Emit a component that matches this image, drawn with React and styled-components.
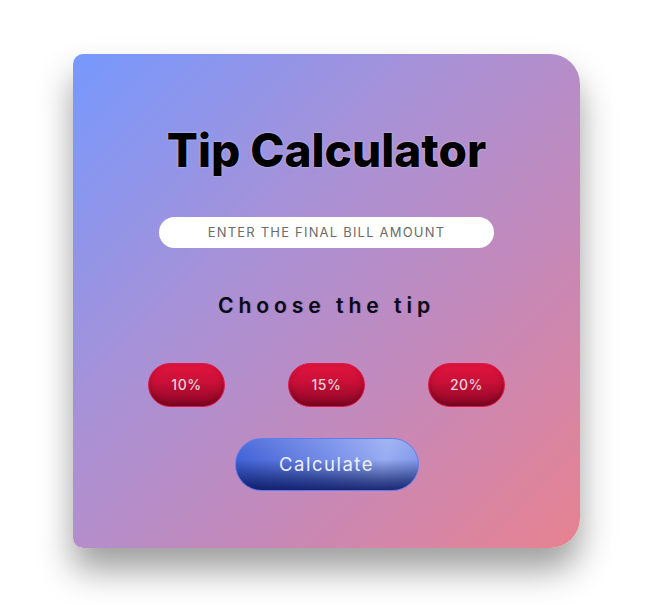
import React from 'react';
import styled, {createGlobalStyle} from 'styled-components';

const GlobalStyle = createGlobalStyle`
  body {
    margin: 0;
    background: #ffffff;
    font-family: "Inter", "Noto Sans", sans-serif;
  }
`;

const Wrapper = styled.main`
  min-height: 100vh;
  display: flex;
  align-items: center;
  justify-content: center;
  padding: 0 10px 4px 0;
  box-sizing: border-box;
`;

const Card = styled.section`
  width: 507px;
  height: 494px;
  box-sizing: border-box;
  padding-top: 68px;
  display: flex;
  flex-direction: column;
  align-items: center;
  border-radius: 10px 30px 30px 10px;
  background: linear-gradient(135deg, #7699fd 0%, #a991d6 38%, #c489ba 66%, #e88290 100%);
  box-shadow: 0 22px 34px rgba(0, 0, 0, 0.38);
`;

const Title = styled.h1`
  margin: 0;
  font-size: 46px;
  line-height: 56px;
  font-weight: 800;
  color: #000;
  text-shadow: 0 0 2px rgba(225, 232, 255, 0.85);
`;

const BillInput = styled.input`
  margin-top: 39px;
  width: 335px;
  height: 31px;
  box-sizing: border-box;
  border: none;
  outline: none;
  border-radius: 16px;
  background: #fff;
  text-align: center;
  font-family: inherit;
  font-size: 13px;
  letter-spacing: 1.2px;
  color: #333;

  &::placeholder {
    color: #6b6b6b;
    text-transform: uppercase;
  }
`;

const Subtitle = styled.h2`
  margin: 43px 0 0;
  font-size: 21px;
  line-height: 30px;
  font-weight: 600;
  letter-spacing: 5px;
  color: #0a0a14;
  text-shadow: 1px 0 1px rgba(80, 60, 160, 0.3);
`;

const TipRow = styled.div`
  margin-top: 42px;
  display: flex;
  gap: 63px;
`;

const TipButton = styled.button`
  width: 77px;
  height: 44px;
  border-radius: 22px;
  border: 1px solid #e0184a;
  background: linear-gradient(to bottom, #e0143e 0%, #cc1038 40%, #8c0626 100%);
  box-shadow: inset 0 -3px 6px rgba(60, 0, 10, 0.35);
  color: #ecd3dc;
  font-family: inherit;
  font-size: 14px;
  font-weight: 500;
  letter-spacing: 0.5px;
  cursor: pointer;
`;

const CalcButton = styled.button`
  margin-top: 31px;
  width: 184px;
  height: 53px;
  border-radius: 27px;
  border: 1px solid #5f7cf0;
  background:
    linear-gradient(to bottom, rgba(255, 255, 255, 0.1) 0%, rgba(255, 255, 255, 0) 40%, rgba(5, 20, 90, 0.6) 80%, rgba(5, 18, 95, 0.85) 100%),
    linear-gradient(100deg, #3f60d6 0%, #6f89e6 45%, #98acf2 80%, #7f97ea 100%);
  color: #eef0ff;
  font-family: inherit;
  font-size: 18.5px;
  letter-spacing: 1.5px;
  cursor: pointer;
`;

const tips = ['10%', '15%', '20%'];

const App = () => {
  return (
    <Wrapper>
      <GlobalStyle/>
      <Card>
        <Title>Tip Calculator</Title>
        <BillInput type="text" placeholder="Enter the final bill amount"/>
        <Subtitle>Choose the tip</Subtitle>
        <TipRow>
          {tips.map(t => <TipButton key={t}>{t}</TipButton>)}
        </TipRow>
        <CalcButton>Calculate</CalcButton>
      </Card>
    </Wrapper>
  );
}

export default App;
